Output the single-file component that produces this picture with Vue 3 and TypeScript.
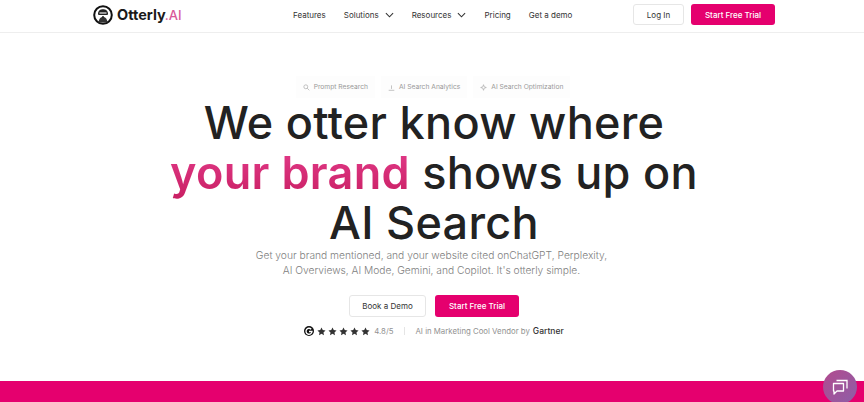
<script setup lang="ts">
const navItems = [
  { label: 'Features', caret: false },
  { label: 'Solutions', caret: true },
  { label: 'Resources', caret: true },
  { label: 'Pricing', caret: false },
  { label: 'Get a demo', caret: false },
]
const stars = [1, 2, 3, 4, 5]
</script>

<template>
  <div class="page">
    <header class="top">
      <div class="brand">
        <svg class="logo" viewBox="0 0 20 20" width="20" height="20">
          <circle cx="10" cy="10" r="8.800" fill="#fff" stroke="#111" stroke-width="2" />
          <path d="M5 9C5 5.500 7.500 4.200 10 4.200S15 5.500 15 9l-.5 1h-9z" fill="#222" />
          <path d="M6.500 8h7" stroke="#fff" stroke-width="1.100" />
          <path d="M5.500 17.500c.3-3.500 1.700-5.500 4.500-5.500s4.200 2 4.500 5.500z" fill="#333" />
          <circle cx="10" cy="11.800" r=".9" fill="#111" />
        </svg>
        <span class="word">Otterly</span><span class="ai">.AI</span>
      </div>
      <nav class="nav">
        <span v-for="n in navItems" :key="n.label" class="nav-item">
          {{ n.label }}
          <svg v-if="n.caret" viewBox="0 0 10 6" width="9" height="6" class="caret">
            <path d="M1 1l4 4 4-4" fill="none" stroke="#333" stroke-width="1.200" />
          </svg>
        </span>
      </nav>
      <div class="actions">
        <button class="btn ghost small">Log In</button>
        <button class="btn solid small wide">Start Free Trial</button>
      </div>
    </header>

    <main class="hero">
      <div class="tabs">
        <span class="tab">
          <svg viewBox="0 0 10 10" width="7" height="7"><circle cx="4" cy="4" r="2.800" fill="none" stroke="#aaa" /><path d="M6 6l3 3" stroke="#aaa" /></svg>
          Prompt Research
        </span>
        <span class="tab">
          <svg viewBox="0 0 10 10" width="7" height="7"><path d="M1 9h8M5 7V2" stroke="#aaa" /></svg>
          AI Search Analytics
        </span>
        <span class="tab">
          <svg viewBox="0 0 10 10" width="7" height="7"><path d="M5 1l1 3 3 1-3 1-1 3-1-3-3-1 3-1z" fill="none" stroke="#aaa" /></svg>
          AI Search Optimization
        </span>
      </div>
      <h1 class="title">
        We otter know where<br />
        <span class="pink">your brand</span> shows up on<br />
        AI Search
      </h1>
      <p class="sub">
        Get your brand mentioned, and your website cited onChatGPT, Perplexity,<br />
        AI Overviews, AI Mode, Gemini, and Copilot. It's otterly simple.
      </p>
      <div class="cta">
        <button class="btn ghost large">Book a Demo</button>
        <button class="btn solid large">Start Free Trial</button>
      </div>
      <div class="proof">
        <svg viewBox="0 0 10 10" width="10" height="10"><circle cx="5" cy="5" r="5" fill="#111" /><path d="M7.200 3.200A3 3 0 1 0 8 5.500H5" fill="none" stroke="#fff" stroke-width="1.300" /></svg>
        <span class="stars">
          <svg v-for="s in stars" :key="s" viewBox="0 0 10 10" width="9" height="9"><path d="M5 .5l1.400 2.900 3.100.4-2.300 2.200.6 3.100L5 7.600 2.200 9.100l.6-3.100L.5 3.800l3.100-.4z" fill="#333" /></svg>
        </span>
        <span class="score">4.8/5</span>
        <span class="bar"></span>
        <span class="score">AI in Marketing Cool Vendor by</span>
        <span class="gartner">Gartner</span>
      </div>
    </main>

    <div class="band"></div>
    <button class="chat" aria-label="Chat">
      <svg viewBox="0 0 20 20" width="20" height="20">
        <path d="M3.500 6.500h10v7.500h-6.500l-3 3v-3h-.5z" fill="none" stroke="#fff" stroke-width="1.300" stroke-linejoin="round" />
        <path d="M6.500 3.500h10.500v8" fill="none" stroke="#fff" stroke-width="1.300" />
      </svg>
    </button>
  </div>
</template>

<style>
html, body { margin: 0; background: #fff; overflow: hidden; }
</style>

<style scoped>
.page {
  position: relative;
  width: 864px;
  height: 402px;
  overflow: hidden;
  display: flex;
  flex-direction: column;
  font-family: Inter, "Liberation Sans", sans-serif;
  color: #222;
}
.top {
  height: 33px;
  box-sizing: border-box;
  border-bottom: 1px solid #eee;
  display: flex;
  align-items: center;
  padding: 0 89px 3px 93px;
}
.brand { display: flex; align-items: center; width: 200px; }
.logo { margin-right: 4px; }
.word { font-size: 14.500px; font-weight: 700; color: #1a1a1a; }
.ai { font-size: 13px; font-weight: 500; color: #d9589a; margin-left: -1px; }
.nav { display: flex; align-items: center; gap: 18px; font-size: 8px; color: #333; }
.nav-item { display: inline-flex; align-items: center; gap: 6px; }
.actions { margin-left: auto; display: flex; gap: 7px; }
.btn {
  font-family: inherit;
  border-radius: 3px;
  box-sizing: border-box;
  padding: 0;
}
.ghost { background: #fff; border: 1px solid #e6e6e6; color: #333; }
.solid { background: #e5006e; border: 0; color: #fff; font-weight: 500; }
.small { height: 21px; width: 51px; font-size: 8px; }
.small.wide { width: 84px; }
.large { height: 22px; font-size: 8px; }
.ghost.large { width: 77px; }
.solid.large { width: 84px; }
.hero { flex: 1; display: flex; flex-direction: column; align-items: center; padding: 43px 0 0 4px; }
.tabs { display: flex; gap: 6px; height: 22px; margin-right: 2px; }
.tab {
  display: inline-flex;
  align-items: center;
  gap: 4px;
  padding: 0 7px;
  font-size: 6.700px;
  color: #999;
  background: #fdfdfd;
}
.title {
  margin: 0;
  font-size: 45px;
  line-height: 50px;
  font-weight: 500;
  text-align: center;
  color: #222;
  letter-spacing: .3px;
}
.pink {
  font-weight: 600;
  background: linear-gradient(180deg, #e43c8c, #c81f62);
  -webkit-background-clip: text;
  background-clip: text;
  color: transparent;
}
.sub {
  margin: 0 5px 0 0;
  font-size: 10.250px;
  line-height: 15px;
  font-weight: 300;
  color: #808080;
  text-align: center;
}
.cta { display: flex; gap: 9px; margin-top: 17px; }
.proof { display: flex; align-items: center; gap: 3px; margin-top: 9px; font-size: 7.800px; color: #929292; }
.stars { display: inline-flex; gap: 2px; }
.score { font-weight: 400; margin-left: 1px; }
.bar { width: 1px; height: 8px; background: #e5e5e5; margin: 0 6px 0 8px; }
.gartner { font-size: 8.500px; font-weight: 500; color: #333; }
.band { height: 21px; background: #e5006e; }
.chat {
  position: absolute;
  right: 7px;
  bottom: -2px;
  width: 34px;
  height: 34px;
  border-radius: 50%;
  border: 0;
  padding: 0;
  display: flex;
  align-items: center;
  justify-content: center;
  background: linear-gradient(135deg, #b24a8e, #8d5fa8);
}
</style>
